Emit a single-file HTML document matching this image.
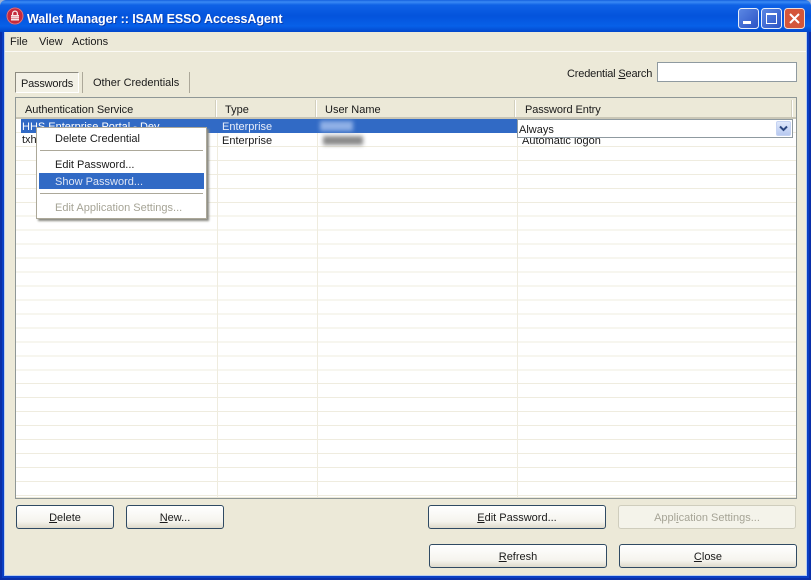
<!DOCTYPE html>
<html><head><meta charset="utf-8"><style>
*{box-sizing:border-box}
html,body{margin:0;padding:0}
body{width:811px;height:580px;position:relative;overflow:hidden;background:#0a3fc4;font-family:"Liberation Sans",sans-serif;font-size:11px;color:#1a1a1a}
.a{position:absolute;white-space:nowrap}
.t{letter-spacing:-.06px}
.btn{position:absolute;border:1px solid #2f4a63;border-radius:3px;background:linear-gradient(#ffffff,#f5f4ee 70%,#dedacb);text-align:center;font-size:11px;line-height:24px;height:24px}
u{text-decoration:underline}
.hs{position:absolute;top:100px;width:2px;height:17px;background:#d2cfbd;border-right:1px solid #fff}
.vl{position:absolute;top:119px;height:378px;width:1px;background:#efecdf}
</style></head><body>
<div class="a" style="left:0;top:32px;width:2px;height:548px;background:#0a2fa8"></div>
<div class="a" style="left:809px;top:32px;width:2px;height:548px;background:#0a2fa8"></div>
<div class="a" style="left:0;top:578px;width:811px;height:2px;background:#0a2fa8"></div>
<div class="a" style="left:0;top:0;width:811px;height:32px;background:#9fb2d2"></div>
<div class="a" style="left:0;top:0;width:811px;height:32px;border-radius:6px 6px 0 0;background:linear-gradient(#1560de 0,#3a8af5 2px,#0f62e6 5px,#0453dc 16px,#0760e8 26px,#0247cc 32px)"></div>
<svg class="a" style="left:6px;top:7px" width="18" height="18" viewBox="0 0 18 18"><circle cx="9" cy="9" r="8.5" fill="#c62a3c"/><circle cx="9" cy="9" r="8" fill="none" stroke="#dd7f8a" stroke-width=".8"/><rect x="5" y="8" width="8" height="5.5" fill="#f8e6e6"/><path d="M6.6 8V6.5a2.4 2.4 0 0 1 4.8 0V8" fill="none" stroke="#f8e6e6" stroke-width="1.3"/><path d="M5 9.8h8M5 11.6h8" stroke="#d8727e" stroke-width=".7"/></svg>
<div class="a" style="left:27px;top:12px;font-size:12.5px;font-weight:bold;color:#fff;letter-spacing:-.07px;text-shadow:1px 1px 0 #0a3cae">Wallet Manager :: ISAM ESSO AccessAgent</div>

<svg class="a" style="left:738px;top:8px" width="21" height="21" viewBox="0 0 21 21"><defs><linearGradient id="g" x1="0" y1="0" x2="1" y2="1"><stop offset="0" stop-color="#5c88e4"/><stop offset="1" stop-color="#2a52c4"/></linearGradient></defs><rect x=".5" y=".5" width="20" height="20" rx="3" fill="url(#g)" stroke="#e6edf9"/><rect x="5" y="13" width="8" height="3" fill="#fff"/></svg>
<svg class="a" style="left:761px;top:8px" width="21" height="21" viewBox="0 0 21 21"><rect x=".5" y=".5" width="20" height="20" rx="3" fill="url(#g)" stroke="#e6edf9"/><rect x="5.5" y="6.5" width="10" height="9" fill="none" stroke="#fff"/><rect x="5" y="5" width="11" height="2" fill="#fff"/></svg>
<svg class="a" style="left:784px;top:8px" width="21" height="21" viewBox="0 0 21 21"><rect x=".5" y=".5" width="20" height="20" rx="3" fill="#d4563a" stroke="#f1dcd4"/><path d="M6 6l9 9M15 6l-9 9" stroke="#fff" stroke-width="2"/></svg>

<div class="a" style="left:4px;top:32px;width:803px;height:544px;background:#b8cdf0"></div>
<div class="a" style="left:5px;top:32px;width:801px;height:543px;background:#ece9d8"></div>
<div class="a" style="left:5px;top:51px;width:801px;height:1px;background:#fbfaf5"></div>
<div class="a" style="left:10px;top:36px">File</div>
<div class="a" style="left:39px;top:36px">View</div>
<div class="a" style="left:72px;top:36px">Actions</div>

<div class="a" style="left:15px;top:72px;width:64px;height:21px;border:1px solid;border-color:#8d8b80 #fff #fff #8d8b80;background:#f3f1e6;padding:5px 0 0 5px;letter-spacing:-.2px">Passwords</div>
<div class="a" style="left:82px;top:72px;width:1px;height:21px;background:#aca899"></div>
<div class="a" style="left:93px;top:77px">Other Credentials</div>
<div class="a" style="left:189px;top:72px;width:1px;height:21px;background:#aca899"></div>

<div class="a" style="left:567px;top:68px;letter-spacing:-.17px">Credential <u>S</u>earch</div>
<div class="a" style="left:657px;top:62px;width:140px;height:20px;background:#fff;border:1px solid #8f9aa0"></div>

<div class="a" style="left:15px;top:97px;width:782px;height:402px;border:1px solid #8f9796;background:#ece9d8"></div>
<div class="a t" style="left:25px;top:104px">Authentication Service</div>
<div class="a" style="left:225px;top:104px">Type</div>
<div class="a" style="left:325px;top:104px">User Name</div>
<div class="a" style="left:525px;top:104px;letter-spacing:-.1px">Password Entry</div>
<div class="hs" style="left:215px"></div><div class="hs" style="left:315px"></div><div class="hs" style="left:514px"></div><div class="hs" style="left:791px"></div>
<div class="a" style="left:16px;top:117px;width:780px;height:2px;background:#c9c6b6"></div>

<div class="a" style="left:16px;top:119px;width:780px;height:378px;background-color:#fff;background-image:repeating-linear-gradient(#fff 0,#fff 12.96px,#efecdf 12.96px,#efecdf 13.96px)"></div>
<div class="vl" style="left:217px"></div><div class="vl" style="left:317px"></div><div class="vl" style="left:517px"></div>

<div class="a" style="left:21px;top:119px;width:497px;height:14px;background:#316ac5"></div>
<div class="a" style="left:22px;top:121px;color:#fff;line-height:13px">HHS Enterprise Portal - Dev</div>
<div class="a" style="left:22px;top:134px;line-height:13px">txh</div>
<div class="a" style="left:222px;top:121px;color:#e8eefa;line-height:13px">Enterprise</div>
<div class="a" style="left:222px;top:135px;line-height:13px">Enterprise</div>
<div class="a" style="left:320px;top:121px;width:33px;height:10px;background:#8fb0e6;filter:blur(2px)"></div>
<div class="a" style="left:323px;top:136px;width:40px;height:9px;background:#8a8a8a;filter:blur(2px)"></div>
<div class="a" style="left:522px;top:135px;line-height:13px">Automatic logon</div>

<div class="a" style="left:517px;top:119px;width:276px;height:19px;background:#fff;border:1px solid #8f9aa0;padding:3px 0 0 1px;line-height:15px;font-size:11px">Always</div>
<div class="a" style="left:776px;top:121px;width:15px;height:15px;background:linear-gradient(#dfe8fb,#b7c9f0);border:1px solid #c5d3f2;border-radius:2px"></div>
<svg class="a" style="left:776px;top:121px" width="15" height="15" viewBox="0 0 15 15"><path d="M4 5.5l3.5 3.5L11 5.5" fill="none" stroke="#2c4780" stroke-width="2"/></svg>

<div class="a" style="left:36px;top:127px;width:171px;height:92px;background:#fff;border:1px solid #aca899;box-shadow:2px 2px 2px #8a8a82"></div>
<div class="a" style="left:55px;top:133px">Delete Credential</div>
<div class="a" style="left:40px;top:150px;width:163px;height:1px;background:#aca899"></div>
<div class="a" style="left:55px;top:159px">Edit Password...</div>
<div class="a" style="left:39px;top:173px;width:165px;height:16px;background:#316ac5"></div>
<div class="a" style="left:55px;top:176px;color:#dfe6f5">Show Password...</div>
<div class="a" style="left:40px;top:193px;width:163px;height:1px;background:#aca899"></div>
<div class="a" style="left:55px;top:202px;color:#a6a496">Edit Application Settings...</div>

<div class="btn" style="left:16px;top:505px;width:98px"><u>D</u>elete</div>
<div class="btn" style="left:126px;top:505px;width:98px"><u>N</u>ew...</div>
<div class="btn" style="left:428px;top:505px;width:178px"><u>E</u>dit Password...</div>
<div class="btn" style="left:618px;top:505px;width:178px;background:#f4f3ea;border-color:#cfcdbd;color:#a6a496">Appl<u>i</u>cation Settings...</div>
<div class="btn" style="left:429px;top:544px;width:178px"><u>R</u>efresh</div>
<div class="btn" style="left:619px;top:544px;width:178px"><u>C</u>lose</div>
</body></html>
